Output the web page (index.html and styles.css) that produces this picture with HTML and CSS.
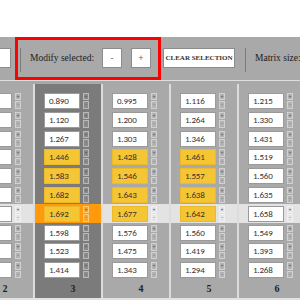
FILE: index.html
```html
<!DOCTYPE html>
<html>
<head>
<meta charset="utf-8">
<link rel="stylesheet" href="styles.css">
</head>
<body>
<div class="page">
  <div class="toolbar">
    <div class="cut-input"></div>
    <div class="group">
      <span class="divider"></span>
      <span class="label">Modify selected:</span>
      <button class="btn first">-</button>
      <button class="btn">+</button>
    </div>
    <button class="clear">Clear selection</button>
    <span class="divider"></span>
    <span class="label">Matrix size:</span>
  </div>
  <div class="matrix">
    <div class="col">
      <div class="cell"><span class="val"></span><span class="spin"><i>+</i><i>-</i></span></div>
      <div class="cell"><span class="val"></span><span class="spin"><i>+</i><i>-</i></span></div>
      <div class="cell"><span class="val"></span><span class="spin"><i>+</i><i>-</i></span></div>
      <div class="cell"><span class="val"></span><span class="spin"><i>+</i><i>-</i></span></div>
      <div class="cell"><span class="val"></span><span class="spin"><i>+</i><i>-</i></span></div>
      <div class="cell"><span class="val"></span><span class="spin"><i>+</i><i>-</i></span></div>
      <div class="cell hl"><span class="val"></span><span class="spin"><i>+</i><i>-</i></span></div>
      <div class="cell"><span class="val"></span><span class="spin"><i>+</i><i>-</i></span></div>
      <div class="cell"><span class="val"></span><span class="spin"><i>+</i><i>-</i></span></div>
      <div class="cell"><span class="val"></span><span class="spin"><i>+</i><i>-</i></span></div>
      <div class="num">2</div>
    </div>
    <div class="col sel">
      <div class="cell"><span class="val">0.890</span><span class="spin"><i>+</i><i>-</i></span></div>
      <div class="cell"><span class="val">1.120</span><span class="spin"><i>+</i><i>-</i></span></div>
      <div class="cell"><span class="val">1.267</span><span class="spin"><i>+</i><i>-</i></span></div>
      <div class="cell"><span class="val y">1.446</span><span class="spin"><i>+</i><i>-</i></span></div>
      <div class="cell"><span class="val y">1.583</span><span class="spin"><i>+</i><i>-</i></span></div>
      <div class="cell"><span class="val y">1.682</span><span class="spin"><i>+</i><i>-</i></span></div>
      <div class="cell hl"><span class="val y">1.692</span><span class="spin"><i>+</i><i>-</i></span></div>
      <div class="cell"><span class="val">1.598</span><span class="spin"><i>+</i><i>-</i></span></div>
      <div class="cell"><span class="val">1.523</span><span class="spin"><i>+</i><i>-</i></span></div>
      <div class="cell"><span class="val">1.414</span><span class="spin"><i>+</i><i>-</i></span></div>
      <div class="num">3</div>
    </div>
    <div class="col">
      <div class="cell"><span class="val">0.995</span><span class="spin"><i>+</i><i>-</i></span></div>
      <div class="cell"><span class="val">1.200</span><span class="spin"><i>+</i><i>-</i></span></div>
      <div class="cell"><span class="val">1.303</span><span class="spin"><i>+</i><i>-</i></span></div>
      <div class="cell"><span class="val y">1.428</span><span class="spin"><i>+</i><i>-</i></span></div>
      <div class="cell"><span class="val y">1.546</span><span class="spin"><i>+</i><i>-</i></span></div>
      <div class="cell"><span class="val y">1.643</span><span class="spin"><i>+</i><i>-</i></span></div>
      <div class="cell hl"><span class="val y">1.677</span><span class="spin"><i>+</i><i>-</i></span></div>
      <div class="cell"><span class="val">1.576</span><span class="spin"><i>+</i><i>-</i></span></div>
      <div class="cell"><span class="val">1.475</span><span class="spin"><i>+</i><i>-</i></span></div>
      <div class="cell"><span class="val">1.343</span><span class="spin"><i>+</i><i>-</i></span></div>
      <div class="num">4</div>
    </div>
    <div class="col">
      <div class="cell"><span class="val">1.116</span><span class="spin"><i>+</i><i>-</i></span></div>
      <div class="cell"><span class="val">1.264</span><span class="spin"><i>+</i><i>-</i></span></div>
      <div class="cell"><span class="val">1.346</span><span class="spin"><i>+</i><i>-</i></span></div>
      <div class="cell"><span class="val y">1.461</span><span class="spin"><i>+</i><i>-</i></span></div>
      <div class="cell"><span class="val y">1.557</span><span class="spin"><i>+</i><i>-</i></span></div>
      <div class="cell"><span class="val y">1.638</span><span class="spin"><i>+</i><i>-</i></span></div>
      <div class="cell hl"><span class="val y">1.642</span><span class="spin"><i>+</i><i>-</i></span></div>
      <div class="cell"><span class="val">1.560</span><span class="spin"><i>+</i><i>-</i></span></div>
      <div class="cell"><span class="val">1.419</span><span class="spin"><i>+</i><i>-</i></span></div>
      <div class="cell"><span class="val">1.294</span><span class="spin"><i>+</i><i>-</i></span></div>
      <div class="num">5</div>
    </div>
    <div class="col">
      <div class="cell"><span class="val">1.215</span><span class="spin"><i>+</i><i>-</i></span></div>
      <div class="cell"><span class="val">1.330</span><span class="spin"><i>+</i><i>-</i></span></div>
      <div class="cell"><span class="val">1.431</span><span class="spin"><i>+</i><i>-</i></span></div>
      <div class="cell"><span class="val">1.519</span><span class="spin"><i>+</i><i>-</i></span></div>
      <div class="cell"><span class="val">1.560</span><span class="spin"><i>+</i><i>-</i></span></div>
      <div class="cell"><span class="val">1.635</span><span class="spin"><i>+</i><i>-</i></span></div>
      <div class="cell hl"><span class="val">1.658</span><span class="spin"><i>+</i><i>-</i></span></div>
      <div class="cell"><span class="val">1.549</span><span class="spin"><i>+</i><i>-</i></span></div>
      <div class="cell"><span class="val">1.393</span><span class="spin"><i>+</i><i>-</i></span></div>
      <div class="cell"><span class="val">1.268</span><span class="spin"><i>+</i><i>-</i></span></div>
      <div class="num">6</div>
    </div>
  </div>
</div>
</body>
</html>
```

FILE: styles.css
```css
html, body {
  margin: 0;
  padding: 0;
  background: #ffffff;
}

.page {
  width: 300px;
  overflow: hidden;
  font-family: "Liberation Serif", "Times New Roman", serif;
  color: #222;
}

.toolbar {
  display: flex;
  align-items: flex-start;
  height: 43px;
  margin-top: 37px;
  background: #a9a9a9;
  border-bottom: 1px solid #dedede;
  white-space: nowrap;
}

.cut-input {
  flex: 0 0 auto;
  width: 11px;
  height: 20px;
  margin-top: 11px;
  box-sizing: border-box;
  background: #fff;
  border: 1px solid #8c8c8c;
  border-left: 0;
}

.group {
  flex: 0 0 auto;
  display: flex;
  align-items: flex-start;
  width: 146px;
  height: 43px;
  margin-left: 4px;
  padding: 0 7px 0 2px;
  box-sizing: border-box;
  border: 3px solid #ff0000;
}

.divider {
  flex: 0 0 auto;
  width: 1px;
  height: 24px;
  background: #7c7c7c;
  margin-top: 8px;
}

.label {
  font-size: 9.5px;
  line-height: 20px;
  margin-top: 8px;
  margin-left: 9px;
  color: #222;
}

.btn {
  flex: 0 0 auto;
  width: 20px;
  height: 20px;
  margin-top: 8px;
  margin-left: 9px;
  padding: 0;
  box-sizing: border-box;
  background: #fff;
  border: 1px solid #8c8c8c;
  border-radius: 0;
  font-family: "Liberation Sans", Arial, sans-serif;
  font-size: 9px;
  line-height: 18px;
  color: #666;
}

.btn.first {
  margin-left: auto;
}

.clear {
  flex: 0 0 auto;
  width: 72px;
  height: 20px;
  margin-top: 11px;
  margin-left: 2px;
  padding: 0;
  box-sizing: border-box;
  background: #fff;
  border: 1px solid #8c8c8c;
  border-radius: 0;
  font-family: "Liberation Serif", "Times New Roman", serif;
  font-size: 7px;
  font-weight: bold;
  text-transform: uppercase;
  color: #333;
  line-height: 18px;
}

.toolbar > .divider {
  margin-top: 11px;
  margin-left: 10px;
}

.toolbar > .label {
  margin-top: 11px;
  margin-left: 9px;
}

.matrix {
  display: flex;
  margin-left: -35px;
  padding-top: 3px;
  background: #a9a9a9;
  border-bottom: 2px solid #e2e2e2;
}

.col {
  flex: 0 0 66px;
  border-left: 2px solid #dcdcdc;
  padding-top: 7.6px;
}

.col.sel {
  background: #7b7b7b;
}

.cell {
  display: flex;
  align-items: center;
  height: 18.8px;
  padding-left: 9px;
}

.cell.hl {
  background: #e3e3e3;
}

.col.sel .cell.hl {
  background: #ff9a0c;
}

.val {
  flex: 0 0 auto;
  width: 36px;
  height: 16px;
  box-sizing: border-box;
  padding-left: 4px;
  background: #fff;
  border: 1px solid #9a9a9a;
  font-family: Carlito, "Liberation Sans", Arial, sans-serif;
  font-size: 9px;
  letter-spacing: -0.2px;
  line-height: 14px;
  color: #333;
}

.val.y {
  background: #f6c534;
  border-color: #eab92c;
}

.spin {
  flex: 0 0 auto;
  display: flex;
  flex-direction: column;
  gap: 1px;
  width: 6px;
  height: 16px;
  margin-left: 3px;
}

.spin i {
  flex: 1;
  display: block;
  box-sizing: border-box;
  border: 1px solid rgba(255, 255, 255, 0.4);
  background: rgba(255, 255, 255, 0.12);
  font-family: "Liberation Sans", Arial, sans-serif;
  font-style: normal;
  font-size: 5px;
  line-height: 5px;
  text-align: center;
  color: #555;
  overflow: hidden;
}

.num {
  height: 18.4px;
  line-height: 18.4px;
  padding-left: 10px;
  text-align: center;
  font-family: "Liberation Serif", "Times New Roman", serif;
  font-weight: bold;
  font-size: 10px;
  color: #222;
}
```
